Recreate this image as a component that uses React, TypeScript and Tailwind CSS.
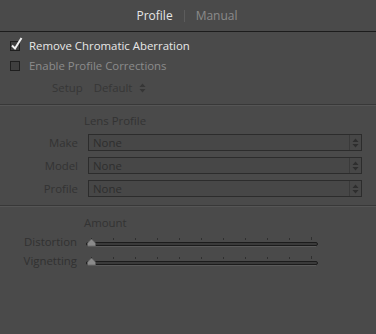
import React from "react"

const font = { fontFamily: '"Open Sans", "Noto Sans", sans-serif' }

const UpDown = ({ className = "" }: { className?: string }) => (
	<svg width="7" height="10" viewBox="0 0 7 10" className={className}>
		<path d="M3.5 0.5 L6.5 4 H0.5 Z M3.5 9.5 L6.5 6 H0.5 Z" fill="currentColor" />
	</svg>
)

const Divider = () => (
	<div className="h-[2px] border-t border-[#383838] border-b border-b-[#555555]" />
)

const Select = ({ label }: { label: string }) => (
	<div className="flex items-center h-[23px]">
		<span className="w-[78px] text-right text-[#333333]">{label}</span>
		<div className="ml-[10px] flex h-[17px] w-[274px] border border-[#2c2c2c] bg-[#474747]">
			<span className="flex-1 pl-[4px] leading-[15px] text-[#2e2e2e]">None</span>
			<div className="w-[12px] border-l border-[#3a3a3a] flex items-center justify-center text-[#2e2e2e]">
				<UpDown />
			</div>
		</div>
	</div>
)

const Slider = ({ label }: { label: string }) => {
	const ticks = Array.from({ length: 11 }, (_, i) => i)
	return (
		<div className="flex items-center h-[19px]">
			<span className="w-[77px] text-right text-[#313131]">{label}</span>
			<svg width="236" height="14" viewBox="0 0 236 14" className="ml-[9px]">
				{ticks.map(i => (
					<line
						key={i}
						x1={5.5 + i * 22}
						x2={5.5 + i * 22}
						y1={i === 10 ? 2 : 3}
						y2="5"
						stroke="#2f2f2f"
						strokeWidth="1"
					/>
				))}
				<rect x="0.5" y="7.5" width="231" height="3" rx="1.5" fill="#3a3a3a" stroke="#1c1c1c" />
				<line x1="2" x2="230" y1="11.5" y2="11.5" stroke="#5a5a5a" />
				<path d="M5.5 4 L9.5 8 V11 H1.5 V8 Z" fill="#8a8a8a" stroke="#5a5a5a" strokeWidth="0.6" />
			</svg>
		</div>
	)
}

const Checkbox = ({ checked }: { checked?: boolean }) => (
	<div className="relative w-[10px] h-[10px] border border-[#1f1f1f] bg-[#3f3f3f]">
		{checked && (
			<svg width="14" height="14" viewBox="0 0 14 14" className="absolute -left-[1px] -top-[5px]">
				<path d="M2 8.5 L5 11.5 L11.5 1" fill="none" stroke="#f0f0f0" strokeWidth="2" />
			</svg>
		)}
	</div>
)

export default function App() {
	return (
		<div className="w-[376px] h-[334px] bg-[#4a4a4a] text-[11.4px] overflow-hidden" style={font}>
			<div className="h-[32px] flex items-center justify-center border-b border-[#1c1c1c] text-[12px] pr-[2px]">
				<span className="text-[#e6e6e6]">Profile</span>
				<span className="mx-[11px] w-px h-[12px] bg-[#5c5c5c]" />
				<span className="text-[#8a8a8a]">Manual</span>
			</div>

			<div className="pl-[10px] pt-[4px]">
				<div className="flex items-center h-[20px]">
					<Checkbox checked />
					<span className="ml-[9px] text-[#e8e8e8]">Remove Chromatic Aberration</span>
				</div>
				<div className="flex items-center h-[19px]">
					<Checkbox />
					<span className="ml-[9px] text-[#8c8c8c]">Enable Profile Corrections</span>
				</div>
				<div className="flex items-center h-[25px] pl-[42px] text-[#363636]">
					<span>Setup</span>
					<span className="ml-[11px]">Default</span>
					<UpDown className="ml-[7px]" />
				</div>
			</div>

			<div className="mt-[4px]">
				<Divider />
			</div>

			<div className="pt-[6px]">
				<div className="h-[18px] flex items-center pl-[84px] text-[#333333]">Lens Profile</div>
				<div className="pt-[1px]">
					<Select label="Make" />
					<Select label="Model" />
					<Select label="Profile" />
				</div>
			</div>

			<div className="mt-[5px]">
				<Divider />
			</div>

			<div className="pt-[7px]">
				<div className="h-[18px] flex items-center pl-[84px] text-[#333333]">Amount</div>
				<div>
					<Slider label="Distortion" />
					<Slider label="Vignetting" />
				</div>
			</div>
		</div>
	)
}
